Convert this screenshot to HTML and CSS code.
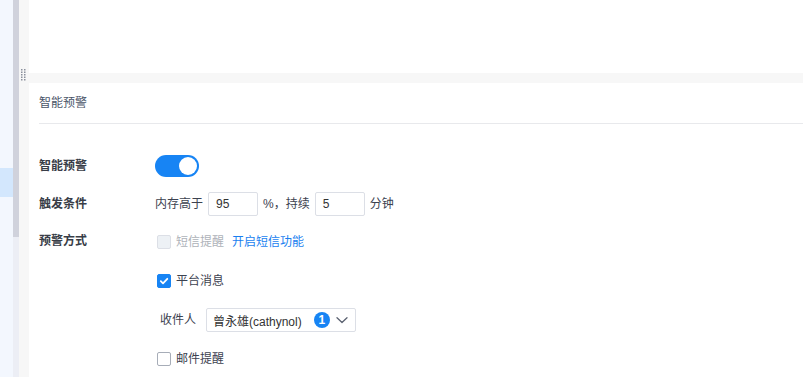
FILE: index.html
```
<!DOCTYPE html>
<html lang="zh-CN">
<head>
    <meta charset="utf-8">
    <title>智能预警</title>
    <link rel="stylesheet" href="styles.css">
</head>
<body>
<div class="layout">
    <div class="sidebar">
        <div class="sidebar-active"></div>
    </div>
    <div class="scrollbar">
        <div class="scrollbar-thumb"></div>
    </div>
    <div class="resizer">
        <svg class="grip" width="5" height="12" viewBox="0 0 5 12">
            <rect x="0" y="0" width="1.5" height="1.5" fill="#8a8f9c"/><rect x="3" y="0" width="1.5" height="1.5" fill="#8a8f9c"/>
            <rect x="0" y="2.5" width="1.5" height="1.5" fill="#8a8f9c"/><rect x="3" y="2.5" width="1.5" height="1.5" fill="#8a8f9c"/>
            <rect x="0" y="5" width="1.5" height="1.5" fill="#8a8f9c"/><rect x="3" y="5" width="1.5" height="1.5" fill="#8a8f9c"/>
            <rect x="0" y="7.5" width="1.5" height="1.5" fill="#8a8f9c"/><rect x="3" y="7.5" width="1.5" height="1.5" fill="#8a8f9c"/>
            <rect x="0" y="10" width="1.5" height="1.5" fill="#8a8f9c"/><rect x="3" y="10" width="1.5" height="1.5" fill="#8a8f9c"/>
        </svg>
    </div>
    <div class="main">
        <div class="top-card"></div>
        <div class="band"></div>
        <div class="panel">
            <div class="panel-title">智能预警</div>
            <div class="form">
                <div class="form-row">
                    <div class="label">智能预警</div>
                    <div class="field">
                        <span class="switch on"><span class="knob"></span></span>
                    </div>
                </div>
                <div class="form-row">
                    <div class="label">触发条件</div>
                    <div class="field">
                        <span class="text">内存高于</span>
                        <span class="input">95</span>
                        <span class="text">%，持续</span>
                        <span class="input">5</span>
                        <span class="text">分钟</span>
                    </div>
                </div>
                <div class="form-row top">
                    <div class="label">预警方式</div>
                    <div class="methods">
                        <div class="method">
                            <span class="checkbox disabled"></span>
                            <span class="text muted">短信提醒</span>
                            <a class="link">开启短信功能</a>
                        </div>
                        <div class="method">
                            <span class="checkbox checked">
                                <svg width="10" height="10" viewBox="0 0 10 10"><path d="M1.8 5.2 L4 7.3 L8.3 2.8" fill="none" stroke="#fff" stroke-width="1.8" stroke-linecap="round" stroke-linejoin="round"/></svg>
                            </span>
                            <span class="text">平台消息</span>
                        </div>
                        <div class="method sub">
                            <span class="text">收件人</span>
                            <span class="select">
                                <span class="select-value">曾永雄(cathynol)</span>
                                <span class="badge">1</span>
                                <svg class="chevron" width="14" height="14" viewBox="0 0 14 14"><path d="M2 4.8 L7 9.5 L12 4.8" fill="none" stroke="#5a6170" stroke-width="1.3" stroke-linecap="round" stroke-linejoin="round"/></svg>
                            </span>
                        </div>
                        <div class="method">
                            <span class="checkbox"></span>
                            <span class="text">邮件提醒</span>
                        </div>
                    </div>
                </div>
            </div>
        </div>
    </div>
</div>
</body>
</html>
```

FILE: styles.css
```
* {
    box-sizing: border-box;
}

body {
    margin: 0;
    font-family: "Liberation Sans", "Noto Sans CJK SC", sans-serif;
    font-size: 12px;
    color: #333;
    background: #fff;
    overflow: hidden;
}

.layout {
    display: flex;
    height: 377px;
}

.sidebar {
    width: 13px;
    flex-shrink: 0;
    background: #f3f7fe;
    padding-top: 168px;
}

.sidebar-active {
    height: 29px;
    background: #d3e7fd;
}

.scrollbar {
    width: 6px;
    flex-shrink: 0;
    background: #eceef5;
}

.scrollbar-thumb {
    height: 237px;
    background: #d0d2dc;
}

.resizer {
    width: 10px;
    flex-shrink: 0;
    background: #f7f7f7;
    padding: 69px 0 0 2px;
}

.grip {
    display: block;
}

.main {
    flex: 1;
    display: flex;
    flex-direction: column;
    min-height: 0;
}

.top-card {
    height: 73px;
    flex-shrink: 0;
    background: #fff;
}

.band {
    height: 10px;
    flex-shrink: 0;
    background: #f7f7f7;
}

.panel {
    flex-shrink: 0;
    padding-left: 10px;
}

.panel-title {
    height: 41px;
    line-height: 40px;
    color: #4a5568;
    border-bottom: 1px solid #e8e9ec;
}

.form {
    padding-top: 30px;
}

.form-row {
    display: flex;
    align-items: center;
    margin-bottom: 14px;
}

.form-row.top {
    align-items: flex-start;
}

.label {
    width: 116px;
    font-weight: bold;
    color: #383d47;
    line-height: 20px;
}

.form-row.top .label {
    line-height: 22px;
}

.field {
    display: flex;
    align-items: center;
    height: 24px;
}

.text {
    color: #3c4250;
    line-height: 24px;
}

.text.muted {
    color: #aeb2b9;
}

.switch {
    position: relative;
    display: block;
    width: 44px;
    height: 22px;
    border-radius: 11px;
    background: #1784f4;
}

.switch .knob {
    position: absolute;
    top: 2px;
    right: 2px;
    width: 18px;
    height: 18px;
    border-radius: 50%;
    background: #fff;
}

.input {
    display: block;
    width: 50px;
    height: 24px;
    line-height: 22px;
    margin: 0 5px;
    padding: 0 7px;
    border: 1px solid #dcdfe6;
    border-radius: 2px;
    color: #333;
}

.methods {
    display: flex;
    flex-direction: column;
    gap: 15px;
}

.method {
    display: flex;
    align-items: center;
    height: 24px;
    margin-left: 2px;
}

.method.sub {
    margin-left: 5px;
}

.checkbox {
    display: flex;
    align-items: center;
    justify-content: center;
    width: 14px;
    height: 14px;
    margin-right: 5px;
    border: 1px solid #a7adb8;
    border-radius: 2px;
    background: #fff;
}

.checkbox.disabled {
    border-color: #dcdfe6;
    background: #edf1f5;
}

.checkbox.checked {
    border-color: #1784f4;
    background: #1784f4;
}

.link {
    margin-left: 8px;
    color: #1a7ff0;
    line-height: 24px;
}

.select {
    display: flex;
    align-items: center;
    width: 150px;
    height: 24px;
    margin-left: 10px;
    padding: 0 6px;
    border: 1px solid #dcdfe6;
    border-radius: 2px;
}

.select-value {
    color: #333;
    white-space: nowrap;
}

.badge {
    display: flex;
    align-items: center;
    justify-content: center;
    width: 16px;
    height: 16px;
    margin-left: 12px;
    border-radius: 50%;
    background: #1784f4;
    color: #fff;
    font-weight: bold;
    font-size: 12px;
}

.chevron {
    margin-left: auto;
}
```
